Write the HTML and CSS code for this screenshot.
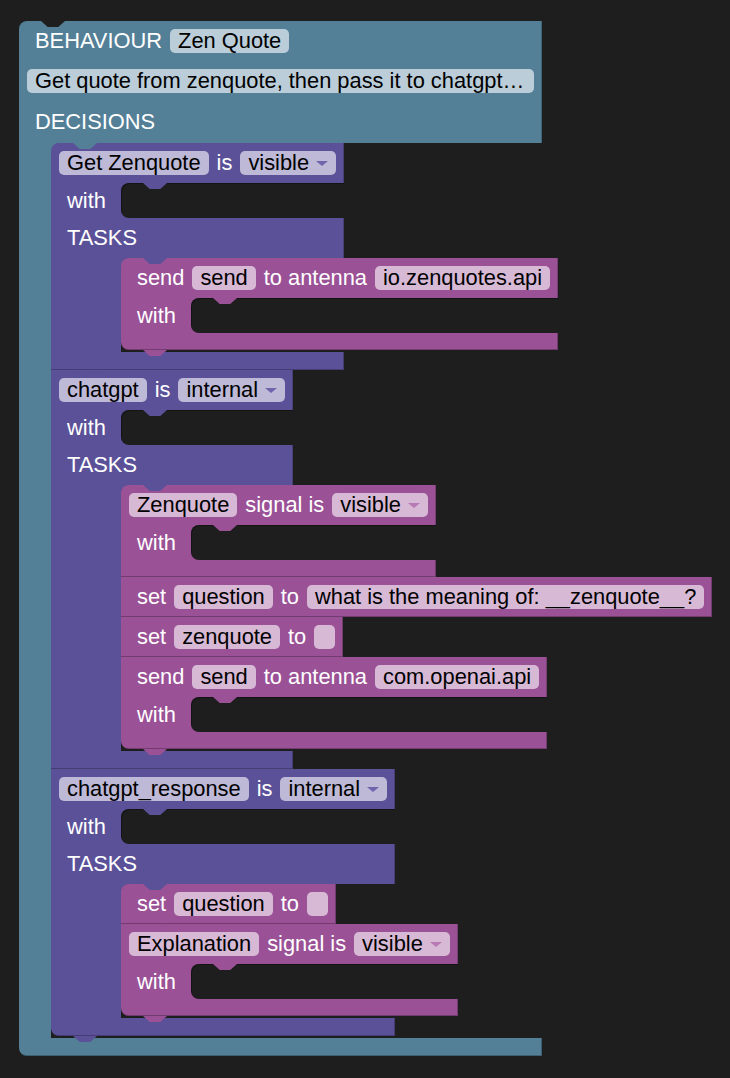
FILE: index.html
```html
<!DOCTYPE html>
<html lang="en">
<head>
<meta charset="utf-8">
<title>Behaviour – Zen Quote</title>
<link rel="stylesheet" href="styles.css">
</head>
<body>
<div class="canvas">
  <div class="blk teal">
    <div class="row head"><span class="lbl">BEHAVIOUR</span><span class="fld">Zen Quote</span></div>
    <div class="row head"><span class="fld comment">Get quote from zenquote, then pass it to chatgpt…</span></div>
    <div class="row tasks"><span class="lbl">DECISIONS</span></div>
    <div class="stmt"><div class="spine"></div><div class="stack">

      <div class="blk dec">
        <div class="row head"><span class="fld">Get Zenquote</span><span class="lbl">is</span><span class="fld dd">visible</span></div>
        <div class="row with"><span class="lbl">with</span><span class="slot"></span></div>
        <div class="row tasks"><span class="lbl">TASKS</span></div>
        <div class="stmt"><div class="spine"></div><div class="stack">
          <div class="blk task">
            <div class="row head"><span class="lbl">send</span><span class="fld">send</span><span class="lbl">to antenna</span><span class="fld">io.zenquotes.api</span></div>
            <div class="row with"><span class="lbl">with</span><span class="slot"></span></div>
            <div class="row bar"></div>
          </div>
        </div></div>
        <div class="row bar"></div>
      </div>

      <div class="blk dec">
        <div class="row head"><span class="fld">chatgpt</span><span class="lbl">is</span><span class="fld dd">internal</span></div>
        <div class="row with"><span class="lbl">with</span><span class="slot"></span></div>
        <div class="row tasks"><span class="lbl">TASKS</span></div>
        <div class="stmt"><div class="spine"></div><div class="stack">
          <div class="blk task">
            <div class="row head"><span class="fld">Zenquote</span><span class="lbl">signal is</span><span class="fld dd">visible</span></div>
            <div class="row with"><span class="lbl">with</span><span class="slot"></span></div>
            <div class="row bar"></div>
          </div>
          <div class="blk task">
            <div class="row head"><span class="lbl">set</span><span class="fld">question</span><span class="lbl">to</span><span class="fld">what is the meaning of: __zenquote__?</span></div>
          </div>
          <div class="blk task">
            <div class="row head"><span class="lbl">set</span><span class="fld">zenquote</span><span class="lbl">to</span><span class="fld empty"></span></div>
          </div>
          <div class="blk task">
            <div class="row head"><span class="lbl">send</span><span class="fld">send</span><span class="lbl">to antenna</span><span class="fld">com.openai.api</span></div>
            <div class="row with"><span class="lbl">with</span><span class="slot"></span></div>
            <div class="row bar"></div>
          </div>
        </div></div>
        <div class="row bar"></div>
      </div>

      <div class="blk dec">
        <div class="row head"><span class="fld">chatgpt_response</span><span class="lbl">is</span><span class="fld dd">internal</span></div>
        <div class="row with"><span class="lbl">with</span><span class="slot"></span></div>
        <div class="row tasks"><span class="lbl">TASKS</span></div>
        <div class="stmt"><div class="spine"></div><div class="stack">
          <div class="blk task">
            <div class="row head"><span class="lbl">set</span><span class="fld">question</span><span class="lbl">to</span><span class="fld empty"></span></div>
          </div>
          <div class="blk task">
            <div class="row head"><span class="fld">Explanation</span><span class="lbl">signal is</span><span class="fld dd">visible</span></div>
            <div class="row with"><span class="lbl">with</span><span class="slot"></span></div>
            <div class="row bar"></div>
          </div>
        </div></div>
        <div class="row bar"></div>
      </div>

    </div></div>
    <div class="row bar"></div>
  </div>
</div>
</body>
</html>
```

FILE: styles.css
```css
* { box-sizing: border-box; }

html, body {
  margin: 0;
  background: #1e1e1e;
}

body {
  font-family: "Liberation Sans", Arial, sans-serif;
  font-size: 21.85px;
  color: #fff;
}

.canvas {
  padding: 21px 0 0 19px;
}

/* ---------- block shell ---------- */
.blk {
  display: flex;
  flex-direction: column;
  width: max-content;
  --sp: 70px;
}

.teal { --c: #537f97; --f: #bacdd8; --sp: 32px; }
.dec  { --c: #5b5198; --f: #bdb9d6; --arrow: #7064ad; }
.task { --c: #9a5196; --f: #d7b9d5; --arrow: #b77ab4; }

.row {
  position: relative;
  display: flex;
  align-items: center;
  background: var(--c);
  white-space: nowrap;
  box-shadow: inset -1px 0 0 rgba(0, 0, 0, 0.22);
}

.head {
  height: 40px;
  padding: 0 8px;
  gap: 8px;
}

.head > .lbl:first-child { margin-left: 8px; }

.lbl { line-height: 24px; }

.fld {
  display: flex;
  align-items: center;
  height: 24px;
  line-height: 24px;
  padding: 0 8px;
  border-radius: 5px;
  background: var(--f);
  color: #000;
}

.fld.comment { padding-right: 10px; }

.fld.empty { width: 21px; padding: 0; }

.dd::after {
  content: "";
  margin-left: 7px;
  border-left: 6px solid transparent;
  border-right: 6px solid transparent;
  border-top: 5px solid var(--arrow);
}

/* ---------- "with" slot rows ---------- */
.with { height: 35px; align-items: stretch; }

.with > .lbl {
  display: flex;
  align-items: center;
  flex: none;
  width: var(--sp);
  padding-left: 16px;
}

.slot {
  position: relative;
  flex: 1;
  background: #1e1e1e;
  border-radius: 8px 0 0 8px;
  box-shadow: inset 1px 1px 0 rgba(0, 0, 0, 0.35);
}

.slot::before {
  content: "";
  position: absolute;
  left: 22px;
  top: 0;
  width: 24px;
  height: 6px;
  background: var(--c);
  clip-path: polygon(0 0, 100% 0, 72% 100%, 28% 100%);
}

/* ---------- statement inputs ---------- */
.tasks {
  height: 40px;
  padding-left: 16px;
}

.teal > .tasks { height: 42px; padding-top: 1px; padding-bottom: 1px; }

.tasks::after {
  content: "";
  position: absolute;
  left: calc(var(--sp) + 22px);
  top: 100%;
  width: 24px;
  height: 6px;
  background: var(--c);
  clip-path: polygon(0 0, 100% 0, 72% 100%, 28% 100%);
  z-index: 2;
}

.stmt {
  display: flex;
  contain: inline-size;
}

.spine {
  flex: none;
  width: var(--sp);
  background: var(--c);
}

.stack {
  flex: 1;
  display: flex;
  flex-direction: column;
  align-items: flex-start;
  padding-bottom: 2px;
  background: linear-gradient(var(--c), var(--c)) 0 0 / 10px 10px no-repeat;
}

/* ---------- bottom bars & tabs ---------- */
.bar { height: 17px; }
.dec > .bar { height: 18px; }
.teal > .bar { height: 18px; }

.blk > .row:last-child {
  box-shadow: inset -1px -1px 0 rgba(0, 0, 0, 0.25);
}

.blk > .row:last-child::after {
  content: "";
  position: absolute;
  left: 22px;
  top: 100%;
  width: 24px;
  height: 6px;
  background: var(--c);
  clip-path: polygon(0 0, 100% 0, 72% 100%, 28% 100%);
  z-index: 1;
}

/* top notch of the top-level block */
.teal > .row:first-child::before {
  content: "";
  position: absolute;
  left: 22px;
  top: 0;
  width: 24px;
  height: 6px;
  background: #1e1e1e;
  clip-path: polygon(0 0, 100% 0, 72% 100%, 28% 100%);
}

/* rounded corners */
.teal > .row:first-child,
.stack > .blk:first-child > .row:first-child { border-top-left-radius: 8px; }

.teal > .row:last-child,
.stack > .blk:last-child > .row:last-child { border-bottom-left-radius: 8px; }
```
